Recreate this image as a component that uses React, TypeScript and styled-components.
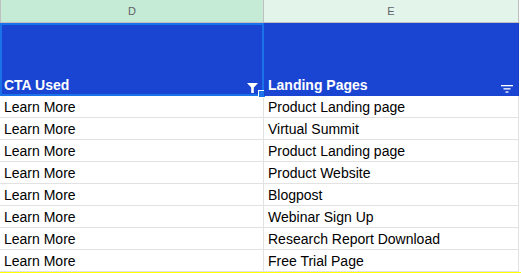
import React from 'react';
import styled, { createGlobalStyle } from 'styled-components';

const GlobalStyle = createGlobalStyle`
  body {
    margin: 0;
    background: #ffffff;
    font-family: 'Liberation Sans', Arial, sans-serif;
  }
`;

const colors = {
  selectedHead: '#c5ead5',
  head: '#e3f4ea',
  headBorder: '#c0c0c0',
  headText: '#5f6368',
  blue: '#1a45d3',
  select: '#1a73e8',
  grid: '#e2e2e2',
  yellow: '#ffff00',
};

const Sheet = styled.div`
  width: 521px;
  height: 273px;
  overflow: hidden;
  display: flex;
  flex-direction: column;
`;

const Row = styled.div`
  display: grid;
  grid-template-columns: 264px 255px 2px;
`;

const ColHead = styled.div<{ $selected?: boolean }>`
  background: ${(p) => (p.$selected ? colors.selectedHead : colors.head)};
  border-right: 1px solid ${colors.headBorder};
  border-bottom: 1px solid ${colors.headBorder};
  box-sizing: border-box;
  height: 23px;
  display: flex;
  align-items: center;
  justify-content: center;
  font-size: 11px;
  color: ${colors.headText};
`;

const LeftEdge = styled.div`
  border-left: 1px solid ${colors.headBorder};
`;

const HeaderCell = styled.div`
  position: relative;
  height: 73px;
  box-sizing: border-box;
  background: ${colors.blue};
  border-right: 1px solid #1640c8;
  display: flex;
  align-items: flex-end;
  justify-content: space-between;
  padding: 0 5px 3px 4px;
  color: #ffffff;
  font-weight: bold;
  font-size: 14px;
`;

const Selection = styled.div`
  position: absolute;
  inset: 0 -1px 0 0;
  border: 2px solid ${colors.select};
  pointer-events: none;
`;

const Handle = styled.div`
  position: absolute;
  right: -4px;
  bottom: -4px;
  width: 6px;
  height: 6px;
  background: ${colors.select};
  border: 1px solid #ffffff;
`;

const Cell = styled.div`
  height: 22px;
  box-sizing: border-box;
  border-right: 1px solid ${colors.grid};
  border-bottom: 1px solid ${colors.grid};
  padding: 1px 4px 0;
  display: flex;
  align-items: center;
  font-size: 14px;
  color: #000000;
  white-space: nowrap;
`;

const Spacer = styled.div``;

const YellowBand = styled.div`
  height: 2px;
  background: ${colors.yellow};
`;

const FunnelIcon = () => (
  <svg width="11" height="10" viewBox="0 0 11 10">
    <path d="M0 0 H11 L6.8 4.6 V10 H4.2 V4.6 Z" fill="#ffffff" />
  </svg>
);

const SortIcon = () => (
  <svg width="12" height="8" viewBox="0 0 12 8">
    <rect x="0" y="0" width="12" height="1.3" fill="#ffffff" />
    <rect x="2.5" y="3.2" width="7" height="1.3" fill="#ffffff" />
    <rect x="4.5" y="6.4" width="3" height="1.3" fill="#ffffff" />
  </svg>
);

const rows: [string, string][] = [
  ['Learn More', 'Product Landing page'],
  ['Learn More', 'Virtual Summit'],
  ['Learn More', 'Product Landing page'],
  ['Learn More', 'Product Website'],
  ['Learn More', 'Blogpost'],
  ['Learn More', 'Webinar Sign Up'],
  ['Learn More', 'Research Report Download'],
  ['Learn More', 'Free Trial Page'],
];

export default function App() {
  return (
    <>
      <GlobalStyle />
      <Sheet>
        <Row>
          <LeftEdge>
            <ColHead $selected>D</ColHead>
          </LeftEdge>
          <ColHead>E</ColHead>
          <Spacer />
        </Row>
        <Row>
          <HeaderCell>
            <span>CTA Used</span>
            <FunnelIcon />
            <Selection>
              <Handle />
            </Selection>
          </HeaderCell>
          <HeaderCell>
            <span>Landing Pages</span>
            <SortIcon />
          </HeaderCell>
          <Spacer />
        </Row>
        {rows.map(([cta, page], i) => (
          <Row key={i}>
            <Cell>{cta}</Cell>
            <Cell>{page}</Cell>
            <Spacer />
          </Row>
        ))}
        <YellowBand />
      </Sheet>
    </>
  );
}
